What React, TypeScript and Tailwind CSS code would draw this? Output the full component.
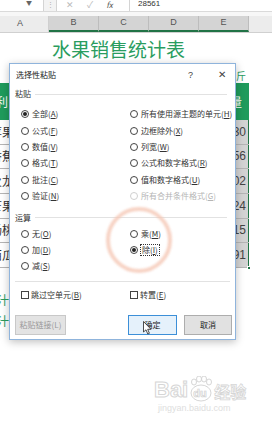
import React from "react";

const Radio = ({ checked = false, disabled = false }: { checked?: boolean; disabled?: boolean }) => (
  <span
    className={
      disabled
        ? "w-[8px] h-[8px] shrink-0 rounded-full border border-[#d0d0d0] bg-white flex items-center justify-center"
        : "w-[8px] h-[8px] shrink-0 rounded-full border border-[#444] bg-white flex items-center justify-center"
    }
  >
    {checked && <span className="w-[4px] h-[4px] rounded-full bg-[#222]" />}
  </span>
);

const Opt = ({
  label,
  k,
  checked,
  disabled,
  focus,
}: {
  label: string;
  k: string;
  checked?: boolean;
  disabled?: boolean;
  focus?: boolean;
}) => (
  <div className="flex items-center h-[16.4px] gap-[3px]">
    <Radio checked={checked} disabled={disabled} />
    <span
      className={
        (disabled ? "text-[#b5b5b5] " : "text-[#333] ") +
        (focus ? "outline outline-1 outline-dotted outline-[#333] px-[1px] " : "") +
        "text-[8px] leading-[10px] whitespace-nowrap"
      }
    >
      {label}(<u>{k}</u>)
    </span>
  </div>
);

const Check = ({ label, k }: { label: string; k: string }) => (
  <div className="flex items-center gap-[2px]">
    <span className="w-[8px] h-[8px] border border-[#444] bg-white shrink-0" />
    <span className="text-[8px] leading-[10px] text-[#333] whitespace-nowrap">
      {label}(<u>{k}</u>)
    </span>
  </div>
);

const names = ["苹果", "香蕉", "火龙", "芒果", "杨桃", "西瓜"];
const nums = ["2830", "1956", "3602", "2124", "1815", "2891"];

export default function App() {
  return (
    <div className="relative w-[272px] h-[433px] overflow-hidden bg-white font-['Noto_Sans_CJK_SC','Noto_Sans',sans-serif]">
      {/* Spreadsheet */}
      <div className="flex flex-col">
        {/* formula bar */}
        <div className="h-[12px] flex bg-[#f3f3f3] border-b border-[#dadada]">
          <div className="w-[44px] bg-white border-r border-[#d4d4d4] flex items-start justify-end pr-[11px]">
            <span className="text-[6px] leading-[6px] text-[#666]">▼</span>
          </div>
          <div className="w-[12px] flex justify-center">
            <span className="text-[7px] leading-[8px] text-[#aaa]">⋮</span>
          </div>
          <div className="w-[74px] bg-white border-x border-[#d4d4d4] flex items-start pl-[9px] gap-[13px] text-[9px] leading-[9px] text-[#bbb]">
            <span>✕</span>
            <span>✓</span>
            <span className="italic text-[#555] text-[8px]">fx</span>
          </div>
          <div className="flex-1 bg-white pl-[8px] text-[8px] leading-[8px] text-[#333] font-['Liberation_Sans',sans-serif]">
            28561
          </div>
        </div>
        <div className="h-[4px] bg-[#f7f7f7]" />
        {/* column headers */}
        <div className="h-[17px] flex bg-[#ececec] border-b border-[#d0d0d0] text-[9px] text-[#555] font-['Liberation_Sans',sans-serif]">
          <div className="w-[49px] flex items-center pl-[17px] border-r border-[#cfcfcf]">A</div>
          {["B", "C", "D", "E"].map((c) => (
            <div
              key={c}
              className="w-[50px] flex items-center justify-center bg-[#d4d4d4] border-r border-[#bdbdbd] border-b-2 border-b-[#217346]"
            >
              {c}
            </div>
          ))}
          <div className="flex-1" />
        </div>
        {/* title */}
        <div className="h-[31px] flex items-center pl-[52px]">
          <span className="text-[19px] leading-[20px] text-[#2a9d5f]">水果销售统计表</span>
        </div>
        {/* unit */}
        <div className="h-[19px] w-[249px] flex items-end justify-end pb-[1px] pr-[3px]">
          <span className="text-[10px] leading-[12px] text-[#2a9d5f]">单位：公斤</span>
        </div>
        {/* header row */}
        <div className="h-[37px] w-[249px] flex bg-[#1f9b5c] text-white text-[12px]">
          <div className="w-[49px] flex items-center overflow-hidden">
            <span className="-ml-[4px] whitespace-nowrap">利</span>
          </div>
          <div className="flex-1 flex items-center justify-end pr-[7px]">
            <span>销售量</span>
          </div>
        </div>
        {/* data rows */}
        {names.map((n, i) => (
          <div key={n} className="h-[24.67px] w-[249px] flex border-b border-[#b5b5b5]">
            <div className="w-[49px] flex items-center overflow-hidden text-[12px] text-[#333]">
              <span className="-ml-[10px] whitespace-nowrap">{n}</span>
            </div>
            <div className="flex-1 bg-[#d3d3d3] border-r border-[#217346] flex items-center justify-end pr-[2px] text-[12px] text-[#444] font-['Liberation_Sans',sans-serif]">
              {nums[i]}
            </div>
          </div>
        ))}
        <div className="h-[22px]" />
        <div className="h-[20px] flex items-center text-[12px] text-[#2a9d5f]">
          <span className="-ml-[3px]">汁</span>
        </div>
        <div className="h-[22px] flex items-center text-[12px] text-[#2a9d5f]">
          <span className="-ml-[3px]">汁</span>
        </div>
      </div>
      {/* fill handle */}
      <div className="absolute left-[247px] top-[266px] w-[4px] h-[4px] bg-[#217346] border border-white" />

      {/* Dialog */}
      <div className="absolute left-[9px] top-[63px] w-[227px] h-[277px] bg-white border border-[#8fb4dc] shadow-[0_2px_8px_rgba(0,0,0,0.25)] flex flex-col">
        <div className="h-[21px] flex items-center pl-[6px] shrink-0">
          <span className="text-[8px] text-[#222]">选择性粘贴</span>
          <span className="ml-auto w-[10px] text-[9px] leading-[10px] text-[#444] font-['Liberation_Sans',sans-serif]">?</span>
          <span className="ml-[20px] mr-[7px] w-[10px] text-[10px] leading-[10px] text-[#444] font-['Liberation_Sans',sans-serif]">✕</span>
        </div>
        <div className="h-[18px] flex items-center pl-[5px] pr-[8px] gap-[4px] shrink-0">
          <span className="text-[8px] text-[#333]">粘贴</span>
          <div className="flex-1 h-px bg-[#e2e2e2]" />
        </div>
        <div className="mt-[3px] grid grid-cols-[109px_109px] pl-[11px]">
          <Opt label="全部" k="A" checked />
          <Opt label="所有使用源主题的单元" k="H" />
          <Opt label="公式" k="F" />
          <Opt label="边框除外" k="X" />
          <Opt label="数值" k="V" />
          <Opt label="列宽" k="W" />
          <Opt label="格式" k="T" />
          <Opt label="公式和数字格式" k="R" />
          <Opt label="批注" k="C" />
          <Opt label="值和数字格式" k="U" />
          <Opt label="验证" k="N" />
          <Opt label="所有合并条件格式" k="G" disabled />
        </div>
        <div className="mt-[6px] h-[15px] flex items-center pl-[5px] pr-[8px] gap-[4px] shrink-0">
          <span className="text-[8px] text-[#333]">运算</span>
          <div className="flex-1 h-px bg-[#e2e2e2]" />
        </div>
        <div className="grid grid-cols-[109px_109px] pl-[11px]">
          <Opt label="无" k="O" />
          <Opt label="乘" k="M" />
          <Opt label="加" k="D" />
          <Opt label="除" k="I" checked focus />
          <Opt label="减" k="S" />
        </div>
        <div className="mt-[6px] mx-[5px] h-px bg-[#e2e2e2]" />
        <div className="mt-[5px] h-[16px] grid grid-cols-[109px_109px] pl-[11px] items-center">
          <Check label="跳过空单元" k="B" />
          <Check label="转置" k="E" />
        </div>
        <div className="mt-[12px] flex pl-[5px]">
          <div className="w-[51px] h-[20px] bg-[#e3e3e3] border border-[#c8c8c8] flex items-center justify-center text-[8px] text-[#9a9a9a]">
            粘贴链接(L)
          </div>
          <div className="ml-[62px] w-[49px] h-[20px] bg-[#e5f1fb] border border-[#3c8fd8] flex items-center justify-center text-[8px] text-[#222]">
            确定
          </div>
          <div className="ml-[7px] w-[48px] h-[20px] bg-[#e1e1e1] border border-[#adadad] flex items-center justify-center text-[8px] text-[#222]">
            取消
          </div>
        </div>
      </div>

      {/* click highlight ring */}
      <div className="absolute left-[106px] top-[207px] w-[66px] h-[66px] rounded-full border-[4px] border-[#f5c8b6] opacity-80 blur-[1px]" />

      {/* mouse cursor */}
      <svg className="absolute left-[143px] top-[321px]" width="9" height="14" viewBox="0 0 9 14">
        <path d="M0.5 0.5 L0.5 11 L3 8.8 L4.8 13 L6.4 12.3 L4.7 8.3 L8 8.3 Z" fill="#fff" stroke="#222" strokeWidth="0.8" />
      </svg>

      {/* watermark */}
      <div className="absolute left-[154px] top-[376px] flex flex-col items-start">
        <div className="flex items-end">
          <span className="text-[22px] leading-[24px] text-white font-bold font-['Liberation_Sans',sans-serif] [-webkit-text-stroke:1px_#d6d6d6]">Bai</span>
          <div className="relative w-[26px] h-[26px]">
            <svg className="absolute inset-0" width="26" height="26" viewBox="0 0 26 26">
              <ellipse cx="13" cy="17" rx="10" ry="8" fill="none" stroke="#d6d6d6" strokeWidth="1" />
              <ellipse cx="6" cy="6" rx="2.5" ry="3" fill="none" stroke="#d6d6d6" strokeWidth="1" />
              <ellipse cx="11" cy="3" rx="2.5" ry="3" fill="none" stroke="#d6d6d6" strokeWidth="1" />
              <ellipse cx="16" cy="3" rx="2.5" ry="3" fill="none" stroke="#d6d6d6" strokeWidth="1" />
              <ellipse cx="21" cy="6" rx="2.5" ry="3" fill="none" stroke="#d6d6d6" strokeWidth="1" />
            </svg>
            <span className="absolute left-[5px] top-[11px] text-[11px] leading-[12px] text-white font-bold font-['Liberation_Sans',sans-serif] [-webkit-text-stroke:0.7px_#d0d0d0]">du</span>
          </div>
          <span className="text-[16px] leading-[22px] text-white font-bold [-webkit-text-stroke:0.8px_#d6d6d6]">经验</span>
        </div>
        <span className="ml-[4px] text-[9px] leading-[12px] text-[#dedede] font-['Liberation_Sans',sans-serif]">jingyan.baidu.com</span>
      </div>
    </div>
  );
}
